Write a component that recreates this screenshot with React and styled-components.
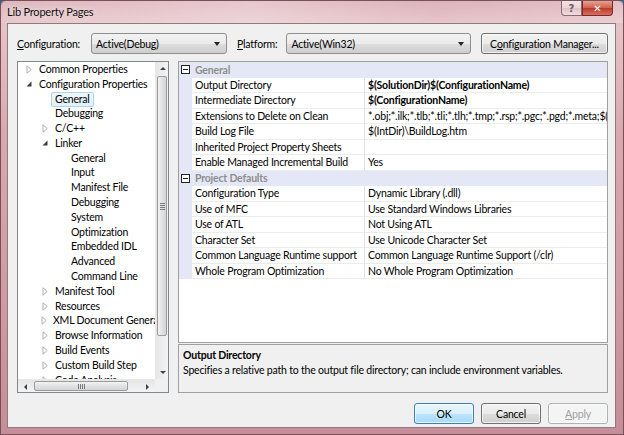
import React from 'react'
import styled, { createGlobalStyle } from 'styled-components'

const GlobalStyle = createGlobalStyle`
  html, body {
    margin: 0;
    padding: 0;
    overflow: hidden;
    background: #3a5a78;
  }
  * {
    box-sizing: border-box;
  }
`

const FONT = `Lato, "Open Sans", "Liberation Sans", sans-serif`

const Window = styled.div`
  width: 624px;
  height: 435px;
  display: flex;
  flex-direction: column;
  font-family: ${FONT};
  font-size: 10.5px;
  letter-spacing: -0.2px;
  color: #000;
  background: linear-gradient(180deg, #d9aab2 0%, #e6c3c8 6%, #d9a9b0 30%, #cf9aa3 70%, #c58e98 100%);
  border: 1px solid #7a5058;
  border-radius: 6px 6px 0 0;
`

const TitleBar = styled.div`
  height: 22px;
  display: flex;
  align-items: flex-start;
  justify-content: space-between;
  padding-left: 6px;
  background: linear-gradient(90deg, rgba(255,255,255,0.15), rgba(255,255,255,0.35) 40%, rgba(255,255,255,0.1) 70%, rgba(255,255,255,0.25));
`

const Title = styled.div`
  padding-top: 4px;
  font-size: 11px;
  color: #111;
  text-shadow: 0 0 6px rgba(255,255,255,0.9);
`

const CaptionButtons = styled.div`
  display: flex;
  margin-right: 10px;
`

const CaptionButton = styled.div`
  width: ${p => (p.$close ? '31px' : '21px')};
  height: 15px;
  display: flex;
  align-items: center;
  justify-content: center;
  border: 1px solid ${p => (p.$close ? '#7a2a2a' : '#8a6a70')};
  border-top: none;
  border-radius: ${p => (p.$close ? '0 0 4px 0' : '0 0 0 4px')};
  background: ${p => (p.$close
    ? 'linear-gradient(180deg, #e8a090 0%, #d0604e 50%, #b83a2a 51%, #d87060 100%)'
    : 'linear-gradient(180deg, rgba(255,255,255,0.6) 0%, rgba(255,255,255,0.3) 50%, rgba(220,190,195,0.4) 51%, rgba(255,255,255,0.4) 100%)')};
  color: ${p => (p.$close ? '#fff' : '#6a5a60')};
  font-family: "DejaVu Sans", sans-serif;
  font-size: 10px;
  font-weight: bold;
  letter-spacing: 0;
`

const Client = styled.div`
  flex: 1;
  margin: 0 7px 6px 6px;
  background: #f0f0f0;
  border: 1px solid #8e7a80;
  padding: 9px 7px 3px 9px;
  display: flex;
  flex-direction: column;
`

const TopRow = styled.div`
  height: 21px;
  display: flex;
  align-items: center;
`

const Label = styled.span`
  margin-right: ${p => p.$gap}px;
  white-space: nowrap;
  u {
    text-decoration: underline;
  }
`

const Select = styled.div`
  width: ${p => p.$w}px;
  height: 21px;
  margin-right: ${p => p.$mr}px;
  display: flex;
  align-items: center;
  padding: 0 6px 0 4px;
  border: 1px solid #8e8f8f;
  border-radius: 3px;
  background: linear-gradient(180deg, #f2f2f2 0%, #ebebeb 50%, #dddddd 51%, #cfcfcf 100%);
  span {
    flex: 1;
  }
`

const Caret = styled.i`
  width: 0;
  height: 0;
  border-left: 3px solid transparent;
  border-right: 3px solid transparent;
  border-top: 4px solid #222;
`

const Button = styled.div`
  width: ${p => p.$w}px;
  height: ${p => p.$h || 21}px;
  display: flex;
  align-items: center;
  justify-content: center;
  border-radius: 3px;
  border: 1px solid ${p => (p.$default ? '#3c7fb1' : p.$disabled ? '#adb2b5' : '#707070')};
  color: ${p => (p.$disabled ? '#a0a0a0' : '#000')};
  background: ${p => (p.$disabled
    ? '#f4f4f4'
    : p.$default
      ? 'linear-gradient(180deg, #eaf6fd 0%, #d9f0fc 50%, #bee6fd 51%, #a7d9f5 100%)'
      : 'linear-gradient(180deg, #f2f2f2 0%, #ebebeb 50%, #dddddd 51%, #cfcfcf 100%)')};
  box-shadow: inset 0 0 0 1px rgba(255,255,255,0.7);
`

const Main = styled.div`
  margin-top: 7px;
  height: 332px;
  display: flex;
  gap: 9px;
`

const TreePanel = styled.div`
  width: 152px;
  border: 1px solid #828790;
  background: #fff;
  display: grid;
  grid-template-columns: 1fr 13px;
  grid-template-rows: 1fr 13px;
`

const TreeBody = styled.div`
  overflow: hidden;
  white-space: nowrap;
`

const TreeRow = styled.div`
  height: 14.8px;
  display: flex;
  align-items: center;
  padding-left: ${p => 6 + p.$level * 16}px;
`

const Expander = styled.span`
  width: 10px;
  height: 10px;
  display: flex;
  align-items: center;
  justify-content: center;
`

const TreeText = styled.span`
  margin-left: 1px;
  padding: 0 3px;
  line-height: 13px;
  border: 1px solid ${p => (p.$selected ? '#a9d4ec' : 'transparent')};
  border-radius: 2px;
  background: ${p => (p.$selected ? 'linear-gradient(180deg, #f0f8fd, #e0f0fa)' : 'transparent')};
`

const VScroll = styled.div`
  display: flex;
  flex-direction: column;
  background: linear-gradient(90deg, #e6e6e6, #f4f4f4);
  border-left: 1px solid #e8e8e8;
`

const HScroll = styled.div`
  display: flex;
  background: linear-gradient(180deg, #e6e6e6, #f4f4f4);
  border-top: 1px solid #e8e8e8;
`

const ScrollCorner = styled.div`
  background: #f0f0f0;
`

const ArrowBox = styled.div`
  width: ${p => p.$w || 13}px;
  height: ${p => p.$h || 13}px;
  flex: none;
  display: flex;
  align-items: center;
  justify-content: center;
`

const Thumb = styled.div`
  ${p => (p.$vertical
    ? 'height: 260px; margin: 1px 1px 0 1px; background: linear-gradient(90deg, #f3f3f3, #e2e2e2 50%, #d5d5d5);'
    : 'width: 94px; margin: 1px 0 1px 0; background: linear-gradient(180deg, #f3f3f3, #e2e2e2 50%, #d5d5d5);')}
  border: 1px solid #9a9a9a;
  border-radius: 2px;
  display: flex;
  align-items: center;
  justify-content: center;
`

const Grip = styled.div`
  display: flex;
  flex-direction: ${p => (p.$vertical ? 'column' : 'row')};
  gap: 1px;
  i {
    display: block;
    background: #7a7a7a;
    ${p => (p.$vertical ? 'width: 5px; height: 1px;' : 'width: 1px; height: 5px;')}
  }
`

const Spacer = styled.div`
  flex: 1;
`

const RightColumn = styled.div`
  flex: 1;
  display: flex;
  flex-direction: column;
`

const Grid = styled.div`
  height: 282px;
  border: 1px solid #a0a0a0;
  background: #fff;
  display: flex;
  flex-direction: column;
`

const GridRow = styled.div`
  height: 15.5px;
  flex: none;
  display: grid;
  grid-template-columns: 13px 172px 1fr;
  background: ${p => (p.$category ? '#e4e8f6' : '#fff')};
`

const Margin = styled.div`
  background: #e4e8f6;
  display: flex;
  align-items: center;
  justify-content: center;
`

const MinusBox = styled.span`
  width: 9px;
  height: 9px;
  border: 1px solid #222;
  background: #fff;
  display: flex;
  align-items: center;
  justify-content: center;
  &::after {
    content: '';
    width: 5px;
    height: 1px;
    background: #222;
  }
`

const Cell = styled.div`
  display: flex;
  align-items: center;
  padding-left: 3px;
  overflow: hidden;
  white-space: nowrap;
  border-bottom: ${p => (p.$category ? 'none' : '1px solid #ececec')};
  border-left: ${p => (p.$value ? '1px solid #e2e2e2' : 'none')};
  font-weight: ${p => (p.$bold ? 700 : 400)};
  color: ${p => (p.$category ? '#8e8e8e' : '#000')};
`

const Filler = styled.div`
  flex: 1;
`

const Description = styled.div`
  flex: 1;
  margin-top: 1px;
  border: 1px solid #a0a0a0;
  background: #f0f0f0;
  padding: 3px 4px 0 4px;
  line-height: 15px;
`

const DescTitle = styled.div`
  font-weight: 700;
`

const Footer = styled.div`
  margin-top: 10px;
  display: flex;
  justify-content: flex-end;
  gap: 7px;
`

const Triangle = ({ open }) => (
  open ? (
    <svg width="8" height="8" viewBox="0 0 8 8">
      <path d="M6.5 1.5 L6.5 6.5 L1.5 6.5 Z" fill="#3c3c3c" />
    </svg>
  ) : (
    <svg width="8" height="9" viewBox="0 0 8 9">
      <path d="M2 0.8 L6.2 4.5 L2 8.2 Z" fill="#fff" stroke="#a6a6a6" strokeWidth="0.9" />
    </svg>
  )
)

const SmallArrow = ({ dir }) => {
  const paths = {
    up: 'M1 5 L4 2 L7 5 Z',
    down: 'M1 2 L4 5 L7 2 Z',
    left: 'M5 1 L2 4 L5 7 Z',
    right: 'M3 1 L6 4 L3 7 Z',
  }
  return (
    <svg width="8" height="8" viewBox="0 0 8 8">
      <path d={paths[dir]} fill="#404040" />
    </svg>
  )
}

const treeItems = [
  { level: 0, text: 'Common Properties', exp: 'closed' },
  { level: 0, text: 'Configuration Properties', exp: 'open' },
  { level: 1, text: 'General', selected: true },
  { level: 1, text: 'Debugging' },
  { level: 1, text: 'C/C++', exp: 'closed' },
  { level: 1, text: 'Linker', exp: 'open' },
  { level: 2, text: 'General' },
  { level: 2, text: 'Input' },
  { level: 2, text: 'Manifest File' },
  { level: 2, text: 'Debugging' },
  { level: 2, text: 'System' },
  { level: 2, text: 'Optimization' },
  { level: 2, text: 'Embedded IDL' },
  { level: 2, text: 'Advanced' },
  { level: 2, text: 'Command Line' },
  { level: 1, text: 'Manifest Tool', exp: 'closed' },
  { level: 1, text: 'Resources', exp: 'closed' },
  { level: 1, text: 'XML Document Generator', exp: 'closed' },
  { level: 1, text: 'Browse Information', exp: 'closed' },
  { level: 1, text: 'Build Events', exp: 'closed' },
  { level: 1, text: 'Custom Build Step', exp: 'closed' },
  { level: 1, text: 'Code Analysis', exp: 'closed' },
]

const gridRows = [
  { category: 'General' },
  { name: 'Output Directory', value: '$(SolutionDir)$(ConfigurationName)', bold: true },
  { name: 'Intermediate Directory', value: '$(ConfigurationName)', bold: true },
  { name: 'Extensions to Delete on Clean', value: '*.obj;*.ilk;*.tlb;*.tli;*.tlh;*.tmp;*.rsp;*.pgc;*.pgd;*.meta;$(TargetPath)' },
  { name: 'Build Log File', value: '$(IntDir)\\BuildLog.htm' },
  { name: 'Inherited Project Property Sheets', value: '' },
  { name: 'Enable Managed Incremental Build', value: 'Yes' },
  { category: 'Project Defaults' },
  { name: 'Configuration Type', value: 'Dynamic Library (.dll)' },
  { name: 'Use of MFC', value: 'Use Standard Windows Libraries' },
  { name: 'Use of ATL', value: 'Not Using ATL' },
  { name: 'Character Set', value: 'Use Unicode Character Set' },
  { name: 'Common Language Runtime support', value: 'Common Language Runtime Support (/clr)' },
  { name: 'Whole Program Optimization', value: 'No Whole Program Optimization' },
]

const App = () => (
  <React.Fragment>
    <GlobalStyle />
    <Window>
      <TitleBar>
        <Title>Lib Property Pages</Title>
        <CaptionButtons>
          <CaptionButton>?</CaptionButton>
          <CaptionButton $close>✕</CaptionButton>
        </CaptionButtons>
      </TitleBar>
      <Client>
        <TopRow>
          <Label $gap={11}><u>C</u>onfiguration:</Label>
          <Select $w={137} $mr={10}>
            <span>Active(Debug)</span>
            <Caret />
          </Select>
          <Label $gap={9}><u>P</u>latform:</Label>
          <Select $w={186} $mr={10}>
            <span>Active(Win32)</span>
            <Caret />
          </Select>
          <Button $w={128}>C<u>o</u>nfiguration Manager...</Button>
        </TopRow>
        <Main>
          <TreePanel>
            <TreeBody>
              {treeItems.map((item, i) => (
                <TreeRow key={i} $level={item.level}>
                  <Expander>
                    {item.exp && <Triangle open={item.exp === 'open'} />}
                  </Expander>
                  <TreeText $selected={item.selected}>{item.text}</TreeText>
                </TreeRow>
              ))}
            </TreeBody>
            <VScroll>
              <ArrowBox><SmallArrow dir="up" /></ArrowBox>
              <Thumb $vertical>
                <Grip $vertical><i /><i /><i /><i /></Grip>
              </Thumb>
              <Spacer />
              <ArrowBox><SmallArrow dir="down" /></ArrowBox>
            </VScroll>
            <HScroll>
              <ArrowBox $w={16}><SmallArrow dir="left" /></ArrowBox>
              <Thumb>
                <Grip><i /><i /><i /><i /></Grip>
              </Thumb>
              <Spacer />
              <ArrowBox $w={16}><SmallArrow dir="right" /></ArrowBox>
            </HScroll>
            <ScrollCorner />
          </TreePanel>
          <RightColumn>
            <Grid>
              {gridRows.map((row, i) => (
                row.category ? (
                  <GridRow key={i} $category>
                    <Margin><MinusBox /></Margin>
                    <Cell $category $bold>{row.category}</Cell>
                    <Cell $category />
                  </GridRow>
                ) : (
                  <GridRow key={i}>
                    <Margin />
                    <Cell>{row.name}</Cell>
                    <Cell $value $bold={row.bold}>{row.value}</Cell>
                  </GridRow>
                )
              ))}
              <Filler />
            </Grid>
            <Description>
              <DescTitle>Output Directory</DescTitle>
              <div>Specifies a relative path to the output file directory; can include environment variables.</div>
            </Description>
          </RightColumn>
        </Main>
        <Footer>
          <Button $w={60} $default>OK</Button>
          <Button $w={60}>Cancel</Button>
          <Button $w={60} $disabled><u>A</u>pply</Button>
        </Footer>
      </Client>
    </Window>
  </React.Fragment>
)

export default App
